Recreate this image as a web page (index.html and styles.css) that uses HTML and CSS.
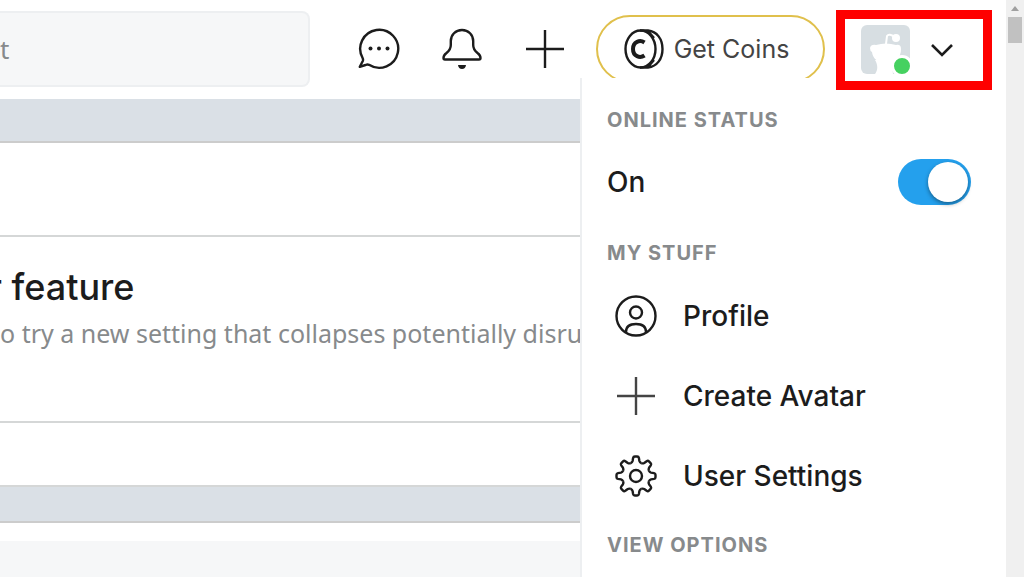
FILE: index.html
```
<!DOCTYPE html>
<html lang="en">
<head>
    <meta charset="UTF-8">
    <meta name="viewport" content="width=device-width, initial-scale=1.0">
    <title>Reddit</title>
    <link rel="stylesheet" href="styles.css">
</head>
<body>

<div class="page">
    <header class="header">
        <input class="search" type="text" placeholder="t" aria-label="Search">
        <nav class="header-icons">
            <button class="icon-button" aria-label="Chat">
                <svg class="icon" viewBox="0 0 42 42">
                    <path d="M4.6 30A19 19 0 1 1 11 36.8Q9.5 36.2 7.5 37L1.8 38.8L4.8 33Q5.4 31.6 4.6 30Z"/>
                    <g class="fill"><circle cx="12.5" cy="20.5" r="2"/><circle cx="21" cy="20.5" r="2"/><circle cx="29.5" cy="20.5" r="2"/></g>
                </svg>
            </button>
            <button class="icon-button" aria-label="Notifications">
                <svg class="icon" viewBox="0 0 42 42">
                    <path d="M21 2C14.5 2 9.8 7 9.8 13V17C9.8 21.5 8 23 5.5 25C3.5 26.5 2.5 28 2.5 30Q2.5 31.5 4 31.5H38Q39.5 31.5 39.5 30C39.5 28 38.5 26.5 36.5 25C34 23 32.2 21.5 32.2 17V13C32.2 7 27.5 2 21 2Z"/>
                    <path class="fill" d="M17 37H25Q24.5 41 21 41T17 37Z"/>
                </svg>
            </button>
            <button class="icon-button" aria-label="Create post">
                <svg class="icon" viewBox="0 0 42 42"><path d="M21 2V40M2 21H40"/></svg>
            </button>
        </nav>
        <button class="coins">
            <svg class="icon coin-icon" viewBox="0 0 40 40">
                <ellipse cx="16.5" cy="20" rx="15" ry="18.5"/>
                <path d="M16 1.5H24C33 2.500 38.5 10 38.5 20S33 37.500 24 38.5H16M24 2L30 9M24 38L30 31"/>
                <path class="coin-c" d="M20.5 13.5C16 10.500 9 12.500 9 20S16 29.500 20.5 26.500"/>
            </svg>
            Get Coins
        </button>
        <button class="account" aria-label="Account menu">
            <span class="avatar">
                <svg viewBox="0 0 49 49">
                    <path class="snoo" d="M14 49C17 45 17 40 14 35H33C29 40 32 45 32 49Z"/>
                    <path class="snoo" d="M9 23Q10 19 15 20Q25 17 35 20Q40 19 40 24Q40 37 25 38Q12 37 11 27Q9 26 9 23Z"/>
                    <circle class="snoo" cx="35" cy="13" r="4"/>
                    <path class="antenna" d="M25 19L26 11Q28 8 34 12"/>
                </svg>
                <span class="online-dot"></span>
            </span>
            <svg class="chevron" viewBox="0 0 24 14"><path d="M2 2L12 12L22 2"/></svg>
        </button>
    </header>

    <main>
        <div class="band band-top"></div>
        <div class="row row-filter"></div>
        <section class="row row-feature">
            <h2>r feature</h2>
            <p>o try a new setting that collapses potentially disru</p>
        </section>
        <div class="row row-empty"></div>
        <div class="band"></div>
        <div class="row-gap"></div>
        <div class="comments"></div>
    </main>

    <div class="menu">
        <h3>Online Status</h3>
        <label class="status">
            On
            <input class="toggle" type="checkbox" checked>
        </label>
        <h3>My Stuff</h3>
        <ul>
            <li><a href="#">
                <svg class="icon" viewBox="0 0 42 42">
                    <circle cx="21" cy="21" r="19.5"/>
                    <circle cx="21" cy="17.5" r="6"/>
                    <path d="M11 37C11 31 15 29 21 29S31 31 31 37"/>
                </svg>
                Profile
            </a></li>
            <li><a href="#">
                <svg class="icon icon-light" viewBox="0 0 42 42"><path d="M21 2V40M2 21H40"/></svg>
                Create Avatar
            </a></li>
            <li><a href="#">
                <svg class="icon" viewBox="-21 -21 42 42">
                    <defs>
                        <path id="tooth" d="M-5.4-12.9C-4.2-13.4-3.7-13.9-3.4-15L-2.9-18Q-2.6-19.5-1.2-19.5H1.2Q2.6-19.5 2.9-18L3.4-15C3.7-13.9 4.2-13.4 5.4-12.9"/>
                    </defs>
                    <use href="#tooth"/>
                    <use href="#tooth" transform="rotate(45)"/>
                    <use href="#tooth" transform="rotate(90)"/>
                    <use href="#tooth" transform="rotate(135)"/>
                    <use href="#tooth" transform="rotate(180)"/>
                    <use href="#tooth" transform="rotate(225)"/>
                    <use href="#tooth" transform="rotate(270)"/>
                    <use href="#tooth" transform="rotate(315)"/>
                    <circle r="6"/>
                </svg>
                User Settings
            </a></li>
        </ul>
        <h3>View Options</h3>
    </div>
</div>

<div class="scrollbar">
    <span class="scroll-arrow"></span>
    <span class="scroll-thumb"></span>
</div>

</body>
</html>
```
FILE: styles.css
```
* { box-sizing: border-box; }
body { margin: 0; height: 100vh; display: flex; overflow: hidden; background: #fff; color: #1c1c1c; font-family: Inter, "Noto Sans", sans-serif; }
button { padding: 0; border: none; background: none; color: inherit; font-family: inherit; cursor: pointer; }
h2, h3, p, ul { margin: 0; padding: 0; }
ul { list-style: none; }

.page { position: relative; flex: 1; min-width: 0; display: flex; flex-direction: column; overflow: hidden; }

/* header */
.header { display: flex; align-items: center; height: 99px; padding: 0 14px 2px 0; }
.search { flex: 1; min-width: 0; height: 76px; margin-right: 48px; padding: 0; border: 2px solid #edeff1; border-left: none; border-radius: 0 8px 8px 0; background: #f6f7f8; font: 26px "Noto Sans", sans-serif; }
.search::placeholder { color: #878a8c; opacity: 1; }
.header-icons { display: flex; gap: 41px; margin-right: 30px; }
.icon-button { display: flex; }
.icon { width: 42px; height: 42px; flex: none; fill: none; stroke: #1c1c1c; stroke-width: 2.4; stroke-linejoin: round; }
.icon .fill { fill: #1c1c1c; stroke: none; }
.icon-light { stroke: #444; }
.coins { display: flex; align-items: center; justify-content: center; gap: 10px; width: 229px; height: 68px; margin-right: 11px; padding-right: 8px; border: 2px solid #e0c04c; border-radius: 34px; font-size: 25px; color: #444; white-space: nowrap; }
.coin-icon { width: 40px; height: 40px; }
.coin-icon .coin-c { stroke-width: 4; }
.account { position: relative; z-index: 2; display: flex; align-items: center; gap: 20px; width: 156px; height: 80px; margin-top: 2px; padding-left: 16px; border: 9px solid #fe0000; background: #fff; }
.avatar { position: relative; width: 49px; height: 49px; border-radius: 6px; background: #d7dee2; }
.avatar svg { display: block; }
.snoo { fill: #fff; }
.antenna { fill: none; stroke: #fff; stroke-width: 2; }
.online-dot { position: absolute; right: -3px; bottom: -3px; width: 22px; height: 22px; border: 3px solid #fff; border-radius: 50%; background: #46d160; }
.chevron { width: 24px; height: 14px; fill: none; stroke: #1c1c1c; stroke-width: 2.6; }

/* content under the header */
main { flex: 1; display: flex; flex-direction: column; }
.band { height: 36px; background: #dae0e6; border-bottom: 2px solid #ccc; }
.band-top { height: 44px; }
.row { border-bottom: 2px solid #d5d7d7; }
.row-filter { height: 94px; }
.row-feature { height: 186px; padding-top: 26px; white-space: nowrap; }
.row-feature h2 { margin-left: -12px; font-size: 36px; line-height: 48px; font-weight: 500; }
.row-feature p { font: 25px/44px "Noto Sans", sans-serif; color: #878a8c; }
.row-empty { height: 64px; }
.row-gap { height: 18px; }
.comments { flex: 1; background: #f6f7f8; }

/* account dropdown */
.menu { position: absolute; top: 78px; right: 0; bottom: 0; width: 426px; padding: 28px 35px 0 25px; border-left: 2px solid #edeff1; background: #fff; }
.menu h3 { font-size: 20px; line-height: 28px; font-weight: 700; letter-spacing: 1px; text-transform: uppercase; color: #878a8c; }
.status { display: flex; align-items: center; justify-content: space-between; height: 96px; margin-bottom: 9px; font-size: 28px; font-weight: 500; }
.toggle { appearance: none; width: 73px; height: 46px; margin: 0; padding: 3px; display: flex; justify-content: flex-end; border-radius: 23px; background: #24a0ed; }
.toggle::before { content: ""; width: 40px; height: 40px; border-radius: 50%; background: #fff; box-shadow: 0 2px 4px rgba(0, 0, 0, 0.4); }
.menu ul { margin: 9px 0 15px; }
.menu a { display: flex; align-items: center; gap: 26px; height: 80px; padding-left: 8px; color: inherit; font-size: 28px; font-weight: 500; text-decoration: none; white-space: nowrap; }

/* scrollbar */
.scrollbar { width: 18px; display: flex; flex-direction: column; align-items: center; padding-top: 6px; background: #f0f0f0; }
.scroll-arrow { border: 4px solid transparent; border-top: none; border-bottom: 5px solid #a0a0a0; }
.scroll-thumb { width: 14px; height: 26px; margin-top: 6px; background: #c1c1c1; }
```
